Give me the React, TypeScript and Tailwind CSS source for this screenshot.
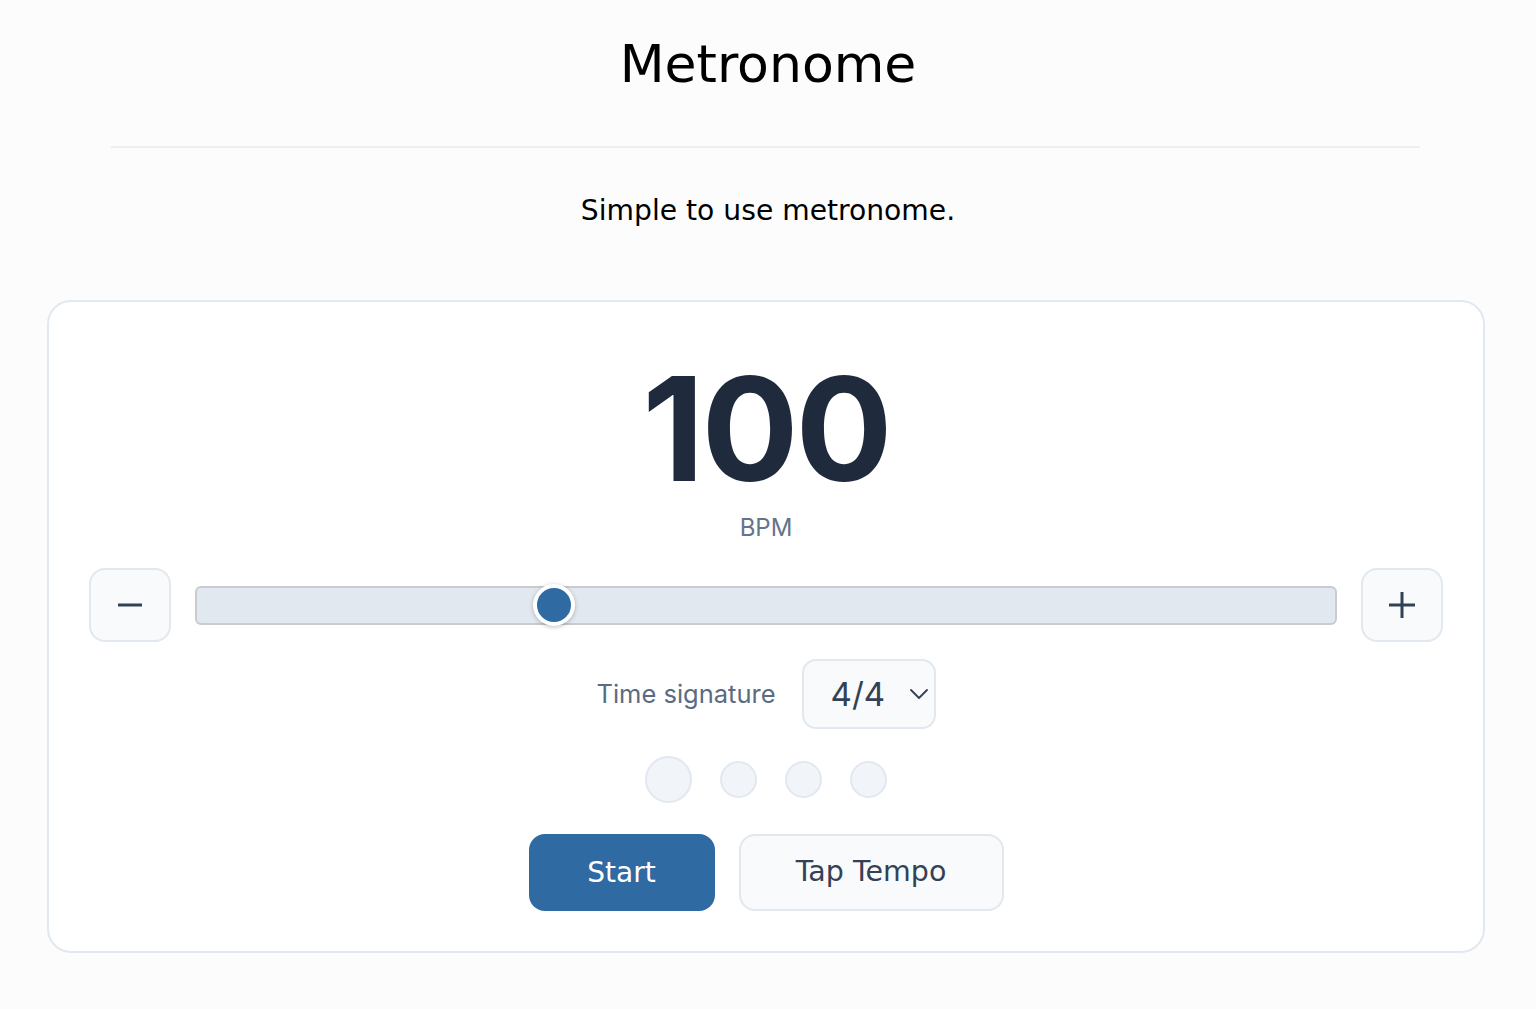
import React from "react";

const verdana = { fontFamily: '"DejaVu Sans", Verdana, sans-serif' };
const inter = { fontFamily: 'Inter, "Noto Sans", sans-serif' };

export default function App() {
  const min = 20;
  const max = 280;
  const bpm = 100;
  const pct = (bpm - min) / (max - min);

  return (
    <div className="min-h-screen bg-[#fcfcfc] pb-[57px]">
      <h1
        className="pt-[32px] text-center text-[52px] leading-[64px] text-black"
        style={verdana}
      >
        Metronome
      </h1>
      <div className="ml-[111px] mr-[116px] mt-[50px] h-[2px] bg-[#eeeff1]" />
      <p
        className="mt-[45px] text-center text-[28.2px] leading-[36px] text-black"
        style={verdana}
      >
        Simple to use metronome.
      </p>

      <div className="ml-[47px] mr-[51px] mt-[71px] rounded-[24px] border-2 border-[#e2e8f0] bg-white px-[40px] pb-[40px] pt-[40px]">
        <div className="flex flex-col items-center" style={inter}>
          <div className="mt-[12px] text-[144px] font-bold leading-[150px] tracking-[-3px] text-[#1f2a3c]">
            100
          </div>
          <div className="mt-[9px] text-[24px] leading-[30px] text-[#64748b]">BPM</div>
        </div>

        <div className="mt-[25px] flex items-center gap-[24px]">
          <button className="flex h-[74px] w-[82px] shrink-0 items-center justify-center rounded-[16px] border-2 border-[#e2e8f0] bg-[#f8fafc]">
            <svg width="26" height="26" viewBox="0 0 26 26">
              <line x1="1" y1="13" x2="25" y2="13" stroke="#334155" strokeWidth="3" />
            </svg>
          </button>
          <div className="relative h-[39px] flex-1 rounded-[6px] border-2 border-[#c9cbcf] bg-[#e2e8f0]">
            <div
              className="absolute top-1/2 h-[42px] w-[42px] -translate-x-1/2 -translate-y-1/2 rounded-full border-[4px] border-white bg-[#2f6aa3] shadow-[0_1px_4px_rgba(0,0,0,0.25)]"
              style={{ left: `calc(19px + (100% - 38px) * ${pct})` }}
            />
          </div>
          <button className="flex h-[74px] w-[82px] shrink-0 items-center justify-center rounded-[16px] border-2 border-[#e2e8f0] bg-[#f8fafc]">
            <svg width="28" height="28" viewBox="0 0 28 28">
              <line x1="1" y1="14" x2="27" y2="14" stroke="#334155" strokeWidth="3" />
              <line x1="14" y1="1" x2="14" y2="27" stroke="#334155" strokeWidth="3" />
            </svg>
          </button>
        </div>

        <div className="mt-[17px] flex items-center justify-center gap-[26px]" style={inter}>
          <span className="text-[25.5px] text-[#5b6b82]">Time signature</span>
          <div className="flex h-[70px] w-[134px] items-center rounded-[14px] border-2 border-[#e2e8f0] bg-[#f8fafc] pl-[27px] pr-[6px]">
            <span className="text-[33px] leading-[40px] text-[#334155]">4/4</span>
            <svg className="ml-auto" width="18" height="10" viewBox="0 0 18 10" fill="none" stroke="#334155" strokeWidth="1.8" strokeLinecap="round" strokeLinejoin="round">
              <polyline points="1,1 9,9 17,1" />
            </svg>
          </div>
        </div>

        <div className="mt-[27px] flex items-center justify-center gap-[28px]">
          <div className="h-[47px] w-[47px] rounded-full border-2 border-[#e2e8f0] bg-[#f1f5f9]" />
          <div className="h-[37px] w-[37px] rounded-full border-2 border-[#e2e8f0] bg-[#f1f5f9]" />
          <div className="h-[37px] w-[37px] rounded-full border-2 border-[#e2e8f0] bg-[#f1f5f9]" />
          <div className="h-[37px] w-[37px] rounded-full border-2 border-[#e2e8f0] bg-[#f1f5f9]" />
        </div>

        <div className="mt-[31px] flex items-center justify-center gap-[24px]" style={verdana}>
          <button className="h-[77px] w-[186px] rounded-[16px] bg-[#2f6aa3] text-[28px] text-white">
            Start
          </button>
          <button className="h-[77px] w-[265px] rounded-[16px] border-2 border-[#e2e8f0] bg-[#f8fafc] text-[28.5px] text-[#334155]">
            Tap Tempo
          </button>
        </div>
      </div>
    </div>
  );
}
